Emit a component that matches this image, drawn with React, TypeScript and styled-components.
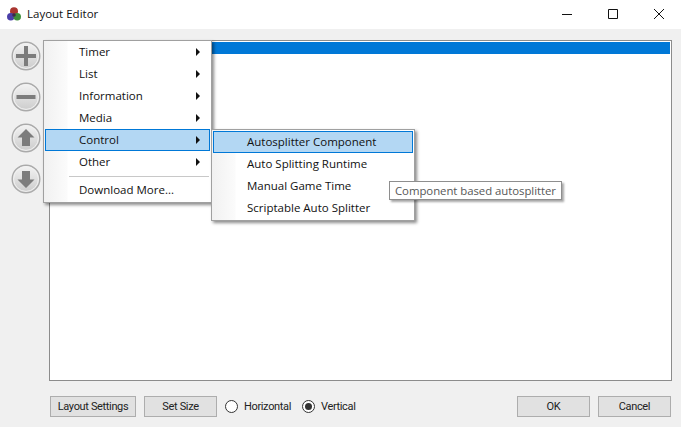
import React from 'react';
import styled, { createGlobalStyle } from 'styled-components';

const GlobalStyle = createGlobalStyle`
  html, body {
    margin: 0;
    padding: 0;
    background: #f0f0f0;
  }
  * {
    box-sizing: border-box;
  }
`;

const Window = styled.div`
  position: relative;
  width: 681px;
  height: 427px;
  overflow: hidden;
  display: flex;
  flex-direction: column;
  background: #f0f0f0;
  color: #000;
  font-family: 'Open Sans', 'Noto Sans', sans-serif;
  font-size: 11.5px;
`;

const TitleBar = styled.div`
  height: 29px;
  flex: none;
  display: flex;
  align-items: center;
  background: #fff;
  padding: 0 0 2px 7px;
`;

const TitleText = styled.span`
  margin-left: 6px;
  font-size: 11.5px;
  color: #111;
`;

const WindowControls = styled.div`
  margin-left: auto;
  margin-right: -1px;
  display: flex;
  align-self: flex-start;
`;

const WindowControl = styled.div`
  width: 46px;
  height: 27px;
  display: flex;
  align-items: center;
  justify-content: center;
`;

const Body = styled.div`
  flex: 1;
  display: flex;
  flex-direction: column;
  padding: 11px 9px 10px 11px;
`;

const Main = styled.div`
  display: flex;
`;

const SideButtons = styled.div`
  width: 38px;
  flex: none;
  display: flex;
  flex-direction: column;
  gap: 11px;
  padding-top: 1px;
`;

const RoundButton = styled.div`
  width: 30px;
  height: 30px;
`;

const ListPanel = styled.div`
  flex: 1;
  background: #fff;
  border: 1px solid #8c8c8c;
  padding: 1px;
  height: 341px;
`;

const SelectedRow = styled.div`
  height: 12px;
  background: #0078d7;
`;

const Footer = styled.div`
  height: 21px;
  margin: 15px 1px 0 39px;
  display: flex;
  align-items: center;
  font-family: Roboto, 'Open Sans', sans-serif;
  font-size: 11px;
  letter-spacing: -0.35px;
  color: #222;
`;

const Button = styled.div<{ $width: number; $gap?: number }>`
  width: ${(p) => p.$width}px;
  height: 21px;
  margin-right: ${(p) => p.$gap ?? 0}px;
  display: flex;
  align-items: center;
  justify-content: center;
  background: #e1e1e1;
  border: 1px solid #adadad;
`;

const RadioLabel = styled.div<{ $gap: number }>`
  display: flex;
  align-items: center;
  gap: 6px;
  margin-right: ${(p) => p.$gap}px;
`;

const RadioCircle = styled.span<{ $checked?: boolean }>`
  width: 13px;
  height: 13px;
  border-radius: 50%;
  border: 1px solid #333;
  background: #fff;
  display: flex;
  align-items: center;
  justify-content: center;
  &::after {
    content: '';
    display: ${(p) => (p.$checked ? 'block' : 'none')};
    width: 7px;
    height: 7px;
    border-radius: 50%;
    background: #333;
  }
`;

const Spacer = styled.div`
  flex: 1;
`;

const Menu = styled.div<{ $left: number; $top: number; $width: number; $height: number }>`
  position: absolute;
  left: ${(p) => p.$left}px;
  top: ${(p) => p.$top}px;
  width: ${(p) => p.$width}px;
  height: ${(p) => p.$height}px;
  background: linear-gradient(to right, #f1f1f1 0, #fbfbfb 23px, #fff 24px);
  border: 1px solid #a0a0a0;
  box-shadow: 2px 2px 3px rgba(0, 0, 0, 0.45);
  display: flex;
  flex-direction: column;
`;

const MenuList = styled.div<{ $top: number }>`
  display: flex;
  flex-direction: column;
  padding-top: ${(p) => p.$top}px;
`;

const MenuItem = styled.div<{ $active?: boolean }>`
  height: 22px;
  margin: 0 1px;
  padding: 0 10px 2px 34px;
  display: flex;
  align-items: center;
  justify-content: space-between;
  font-size: 11.5px;
  color: #111;
  background: ${(p) => (p.$active ? '#b3d7f3' : 'transparent')};
  outline: ${(p) => (p.$active ? '1px solid #0078d7' : 'none')};
  outline-offset: -1px;
`;

const Arrow = styled.span`
  width: 0;
  height: 0;
  margin-top: 2px;
  border-top: 4px solid transparent;
  border-bottom: 4px solid transparent;
  border-left: 4px solid #111;
`;

const Separator = styled.div`
  height: 1px;
  background: #c8c8c8;
  margin: 3px 2px 2px 25px;
`;

const Tooltip = styled.div`
  position: absolute;
  left: 389px;
  top: 181px;
  width: 173px;
  height: 19px;
  display: flex;
  align-items: center;
  padding: 0 0 1px 5px;
  background: #fff;
  border: 1px solid #8e8e8e;
  box-shadow: 2px 2px 2px rgba(0, 0, 0, 0.35);
  color: #575757;
  font-size: 11.4px;
  letter-spacing: -0.05px;
`;

const AppLogo = () => (
  <svg width="14" height="14" viewBox="0 0 14 14">
    <circle cx="7" cy="4.2" r="4" fill="#a9352f" />
    <circle cx="3.8" cy="9.8" r="3.8" fill="#4a3fa8" />
    <circle cx="10.2" cy="9.8" r="3.8" fill="#3f8f3a" />
    <circle cx="7" cy="8" r="1.8" fill="#3a2a4a" />
  </svg>
);

const IconDefs = () => (
  <svg width="0" height="0" style={{ position: 'absolute' }}>
    <defs>
      <linearGradient id="roundFill" x1="0" y1="0" x2="0" y2="1">
        <stop offset="0" stopColor="#f4f4f4" />
        <stop offset="1" stopColor="#cbcbcb" />
      </linearGradient>
    </defs>
  </svg>
);

const RoundIcon: React.FC<{ d: string }> = ({ d }) => (
  <svg width="30" height="30" viewBox="0 0 30 30">
    <circle cx="15" cy="15" r="13.8" fill="url(#roundFill)" stroke="#aaaaaa" strokeWidth="1.4" />
    <circle cx="15" cy="15" r="12.4" fill="none" stroke="#f2f2f2" strokeWidth="1" />
    <path d={d} fill="#7c7c7c" />
  </svg>
);

const PLUS = 'M13 5h4v8h8v4h-8v8h-4v-8H5v-4h8z';
const MINUS = 'M5.5 13h19v4h-19z';
const UP = 'M15 6l8.5 8.5H19V23h-8v-8.5H6.5z';
const DOWN = 'M11 7h8v8.5h4.5L15 24l-8.5-8.5H11z';

const mainItems = ['Timer', 'List', 'Information', 'Media', 'Control', 'Other'];
const subItems = [
  'Autosplitter Component',
  'Auto Splitting Runtime',
  'Manual Game Time',
  'Scriptable Auto Splitter',
];

const App: React.FC = () => (
  <Window>
    <GlobalStyle />
    <IconDefs />
    <TitleBar>
      <AppLogo />
      <TitleText>Layout Editor</TitleText>
      <WindowControls>
        <WindowControl>
          <svg width="10" height="10" viewBox="0 0 10 10">
            <path d="M0 5.5h10" stroke="#111" />
          </svg>
        </WindowControl>
        <WindowControl>
          <svg width="10" height="10" viewBox="0 0 10 10">
            <path d="M.5.5h9v9h-9z" stroke="#111" fill="none" />
          </svg>
        </WindowControl>
        <WindowControl>
          <svg width="10" height="10" viewBox="0 0 10 10">
            <path d="M0 0l10 10M10 0L0 10" stroke="#111" />
          </svg>
        </WindowControl>
      </WindowControls>
    </TitleBar>
    <Body>
      <Main>
        <SideButtons>
          {[PLUS, MINUS, UP, DOWN].map((d) => (
            <RoundButton key={d}>
              <RoundIcon d={d} />
            </RoundButton>
          ))}
        </SideButtons>
        <ListPanel>
          <SelectedRow />
        </ListPanel>
      </Main>
      <Footer>
        <Button $width={86} $gap={8}>Layout Settings</Button>
        <Button $width={73} $gap={8}>Set Size</Button>
        <RadioLabel $gap={11}>
          <RadioCircle />
          Horizontal
        </RadioLabel>
        <RadioLabel $gap={0}>
          <RadioCircle $checked />
          Vertical
        </RadioLabel>
        <Spacer />
        <Button $width={73} $gap={8}>OK</Button>
        <Button $width={73}>Cancel</Button>
      </Footer>
    </Body>

    <Menu $left={43} $top={40} $width={169} $height={163}>
      <MenuList $top={0}>
        {mainItems.map((item) => (
          <MenuItem key={item} $active={item === 'Control'}>
            {item}
            <Arrow />
          </MenuItem>
        ))}
        <Separator />
        <MenuItem>Download More...</MenuItem>
      </MenuList>
    </Menu>

    <Menu $left={211} $top={129} $width={204} $height={92}>
      <MenuList $top={1}>
        {subItems.map((item, i) => (
          <MenuItem key={item} $active={i === 0}>
            {item}
          </MenuItem>
        ))}
      </MenuList>
    </Menu>

    <Tooltip>Component based autosplitter</Tooltip>
  </Window>
);

export default App;
